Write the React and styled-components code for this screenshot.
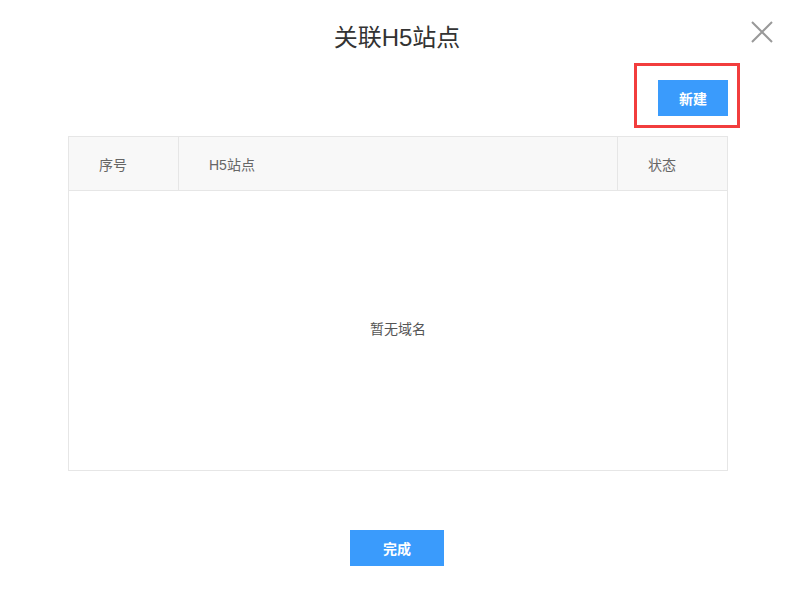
import { styled, createGlobalStyle } from "styled-components";

const GlobalStyle = createGlobalStyle`
  html, body {
    margin: 0;
    padding: 0;
    background: #fff;
  }
  body {
    font-family: "Liberation Sans", "Noto Sans CJK SC", sans-serif;
  }
`;

const Dialog = styled.div`
  position: relative;
  width: 794px;
  height: 594px;
  display: flex;
  flex-direction: column;
  box-sizing: border-box;
  background: #fff;
`;
const Header = styled.div`
  height: 63px;
  display: flex;
  justify-content: center;
  align-items: flex-start;
  padding-top: 21px;
  box-sizing: border-box;
`;
const Title = styled.h1`
  margin: 0;
  font-size: 24px;
  line-height: 34px;
  font-weight: 400;
  color: #333;
`;
const CloseButton = styled.button`
  position: absolute;
  top: 21px;
  right: 21px;
  width: 22px;
  height: 22px;
  padding: 0;
  border: none;
  background: none;
  cursor: pointer;
`;
const Toolbar = styled.div`
  display: flex;
  justify-content: flex-end;
  padding-right: 54px;
`;
const Highlight = styled.div`
  border: 3px solid #f23d3d;
  padding: 14px 9px 9px 21px;
`;
const Button = styled.button`
  width: ${({ $w }) => $w}px;
  height: 36px;
  border: none;
  border-radius: 0;
  background: #3a9bfc;
  color: #fff;
  font-family: inherit;
  font-size: 14px;
  font-weight: 600;
  cursor: pointer;
  display: block;
`;
const Table = styled.div`
  margin: 8px 0 0 68px;
  width: 660px;
  border: 1px solid #e6e6e6;
  box-sizing: border-box;
`;
const HeadRow = styled.div`
  display: grid;
  grid-template-columns: 109px 1fr 110px;
  height: 54px;
  box-sizing: border-box;
  background: #f8f8f8;
  border-bottom: 1px solid #e6e6e6;
`;
const HeadCell = styled.div`
  display: flex;
  align-items: center;
  padding-left: 30px;
  border-left: ${({ $first }) => ($first ? "none" : "1px solid #e6e6e6")};
  font-size: 14px;
  color: #666;
`;
const Empty = styled.div`
  height: 279px;
  box-sizing: border-box;
  padding-bottom: 6px;
  display: flex;
  align-items: center;
  justify-content: center;
  font-size: 14px;
  color: #555;
`;
const Footer = styled.div`
  display: flex;
  justify-content: center;
  padding-top: 59px;
`;

const App = () => {
  return (
    <>
      <GlobalStyle />
      <Dialog>
        <Header>
          <Title>关联H5站点</Title>
        </Header>
        <CloseButton aria-label="关闭">
          <svg width="22" height="22" viewBox="0 0 22 22">
            <path d="M1 1L21 21M21 1L1 21" stroke="#999" strokeWidth="2" fill="none" />
          </svg>
        </CloseButton>
        <Toolbar>
          <Highlight>
            <Button $w={70}>新建</Button>
          </Highlight>
        </Toolbar>
        <Table>
          <HeadRow>
            <HeadCell $first>序号</HeadCell>
            <HeadCell>H5站点</HeadCell>
            <HeadCell>状态</HeadCell>
          </HeadRow>
          <Empty>暂无域名</Empty>
        </Table>
        <Footer>
          <Button $w={94}>完成</Button>
        </Footer>
      </Dialog>
    </>
  );
};

export default App;
